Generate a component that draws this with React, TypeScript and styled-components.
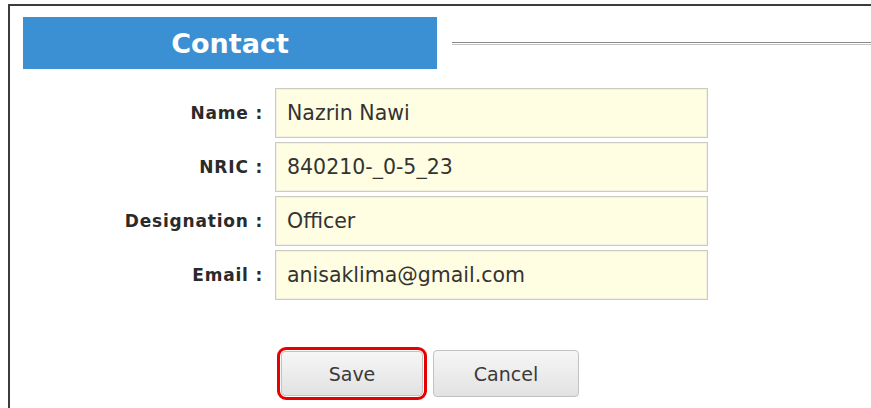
import React from "react";
import styled, { createGlobalStyle } from "styled-components";

const Global = createGlobalStyle`
  html, body {
    margin: 0;
    padding: 0;
    background: #ffffff;
    font-family: "DejaVu Sans", "Liberation Sans", sans-serif;
  }
  #root {
    height: 408px;
    overflow: hidden;
  }
`;

const Frame = styled.div`
  margin: 4px 0 0 8px;
  height: 404px;
  box-sizing: border-box;
  border-top: 2px solid #3c3c3c;
  border-left: 2px solid #3c3c3c;
  padding: 11px 0 0 13px;
  display: flex;
  flex-direction: column;
`;

const HeaderRow = styled.div`
  display: flex;
  align-items: center;
  gap: 15px;
`;

const TitleBar = styled.div`
  width: 414px;
  height: 52px;
  background: #3b8fd3;
  color: #ffffff;
  font-family: "DejaVu Sans", sans-serif;
  font-weight: bold;
  font-size: 27px;
  display: flex;
  align-items: center;
  justify-content: center;
  box-sizing: border-box;
`;

const Rule = styled.div`
  flex: 1;
  height: 1px;
  border-top: 1px solid #8a8a8a;
  border-bottom: 1px solid #c4c4c4;
`;

const Form = styled.div`
  display: grid;
  grid-template-columns: 240px 433px;
  column-gap: 12px;
  row-gap: 4px;
  margin-top: 19px;
`;

const Label = styled.label`
  display: flex;
  align-items: center;
  justify-content: flex-end;
  font-family: "DejaVu Sans", sans-serif;
  font-weight: bold;
  font-size: 17px;
  letter-spacing: 0.8px;
  color: #2a2a2a;
`;

const Field = styled.input`
  height: 50px;
  box-sizing: border-box;
  border: 1px solid #cbcbc0;
  box-shadow: inset 0 0 0 1px #f3f2de;
  background: #fffee2;
  padding: 0 11px;
  font-family: "DejaVu Sans", sans-serif;
  font-size: 20.5px;
  color: #333333;
  outline: none;
`;

const Actions = styled.div`
  display: flex;
  align-items: center;
  gap: 6px;
  margin: 47px 0 0 254px;
`;

const Highlight = styled.div`
  border: 3px solid #e60000;
  border-radius: 9px;
  padding: 1px;
  display: flex;
`;

const Button = styled.button<{ $w: number; $h: number }>`
  width: ${(p) => p.$w}px;
  height: ${(p) => p.$h}px;
  border: 1px solid #c2c2c2;
  border-radius: 4px;
  background: linear-gradient(#f6f6f6, #e2e2e2);
  font-family: "DejaVu Sans", sans-serif;
  font-size: 19px;
  color: #3a3a3a;
  cursor: pointer;
  padding: 0;
`;

const fields = [
  { label: "Name", value: "Nazrin Nawi" },
  { label: "NRIC", value: "840210-_0-5_23" },
  { label: "Designation", value: "Officer" },
  { label: "Email", value: "anisaklima@gmail.com" },
];

export default function App() {
  return (
    <>
      <Global />
      <Frame>
        <HeaderRow>
          <TitleBar>Contact</TitleBar>
          <Rule />
        </HeaderRow>
        <Form>
          {fields.map((f) => (
            <React.Fragment key={f.label}>
              <Label>{f.label} :</Label>
              <Field readOnly value={f.value} />
            </React.Fragment>
          ))}
        </Form>
        <Actions>
          <Highlight>
            <Button $w={142} $h={45}>Save</Button>
          </Highlight>
          <Button $w={146} $h={47}>Cancel</Button>
        </Actions>
      </Frame>
    </>
  );
}
